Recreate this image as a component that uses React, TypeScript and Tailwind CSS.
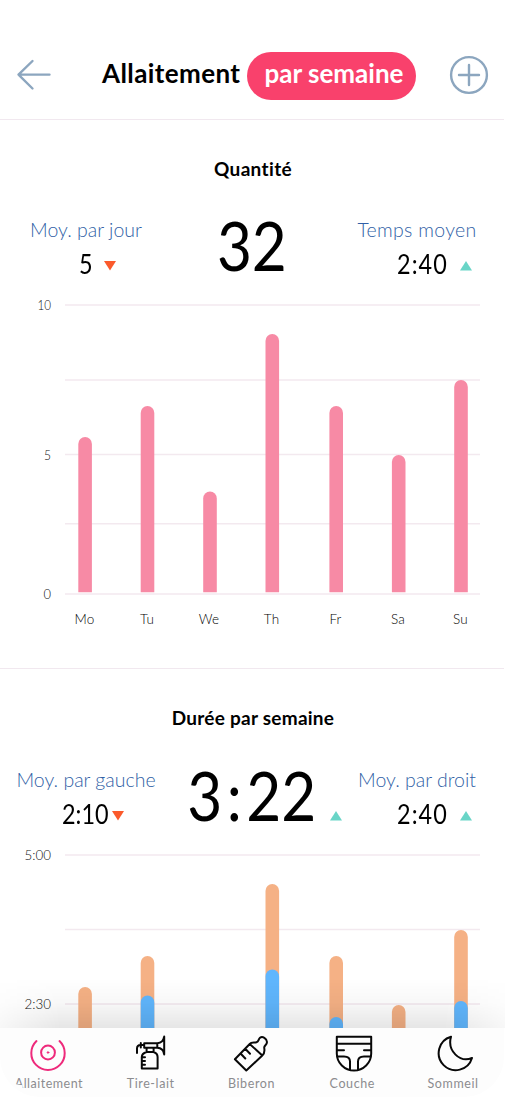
import React from "react";

type Bar = { x: number; top: number; inner?: number };

const days = ["Mo", "Tu", "We", "Th", "Fr", "Sa", "Su"];
const dayX = [84.5, 147, 209, 271.5, 335.5, 398, 460.5];

const quantity: Bar[] = [
  { x: 78.3, top: 437 },
  { x: 140.7, top: 406 },
  { x: 203.2, top: 491.5 },
  { x: 265.5, top: 334 },
  { x: 329.4, top: 406 },
  { x: 391.9, top: 455 },
  { x: 454.2, top: 380 },
];

const duration: Bar[] = [
  { x: 78.3, top: 437 },
  { x: 140.7, top: 406, inner: 445.5 },
  { x: 265.5, top: 334, inner: 419.5 },
  { x: 329.4, top: 406, inner: 467 },
  { x: 391.9, top: 455 },
  { x: 454.2, top: 380, inner: 451 },
];

function barPath(x: number, top: number, bottom: number) {
  return `M${x} ${bottom}V${top + 7}a6.8 7 0 0 1 13.6 0V${bottom}Z`;
}

function Chart({
  bars,
  color,
  labels,
  lines,
  height,
  bottom,
  xLabels = [],
}: {
  bars: Bar[];
  color: string;
  labels: [number, string, number][];
  lines: number[];
  height: number;
  bottom: number;
  xLabels?: string[];
}) {
  return (
    <svg className="shrink-0" width="505" height={height} viewBox={`0 290 505 ${height}`}>
      {lines.map((y) => (
        <line key={y} x1="65" x2="480" y1={y} y2={y} stroke="#f3e9ef" strokeWidth="1.5" />
      ))}
      {bars.map((b) => (
        <g key={b.x}>
          <path d={barPath(b.x, b.top, bottom)} fill={color} />
          {b.inner && <path d={barPath(b.x, b.inner, bottom)} fill="#60b6fd" />}
        </g>
      ))}
      {labels.map(([y, t, w]) => (
        <text key={t} x="51" y={y} textAnchor="end" textLength={w} lengthAdjust="spacingAndGlyphs" fontSize="14" fontWeight="300" fill="#111">
          {t}
        </text>
      ))}
      {xLabels.map((d, i) => (
        <text key={d} x={dayX[i]} y="623.5" textAnchor="middle" fontSize="13.5" fontWeight="300" letterSpacing="0.2" fill="#000">
          {d}
        </text>
      ))}
    </svg>
  );
}

function Trend({ up = false, className = "" }: { up?: boolean; className?: string }) {
  return (
    <svg className={className} width="12" height="10" viewBox="0 0 12 10">
      <path d={up ? "M0 9.5L6 0L12 9.5Z" : "M0 0H12L6 9.5Z"} fill={up ? "#69d5c7" : "#fb5a2c"} />
    </svg>
  );
}

function StatLabel({ children, className = "" }: { children: string; className?: string }) {
  return (
    <span className={`whitespace-nowrap text-[19.5px] font-light leading-[30px] text-[#315fa6] ${className}`}>
      {children}
    </span>
  );
}

function Header() {
  return (
    <header className="flex h-[120px] w-[504px] shrink-0 items-start border-b-[1.5px] border-[#f1e8ef] pt-[52px]">
      <svg className="ml-[16px] mt-[7px] shrink-0" width="36" height="32" viewBox="0 0 36 32" fill="none" stroke="#8ca6bf" strokeWidth="2.4" strokeLinecap="round" strokeLinejoin="round">
        <path d="M16.5 2L2.5 15.6L16.5 29.5M2.5 15.6H33.5" />
      </svg>
      <h1 className="ml-[50px] flex items-start text-[26px] font-bold leading-[42px] text-black">
        <span className="w-[145px] whitespace-nowrap tracking-[0.4px]">Allaitement</span>
        <span className="flex h-[48px] w-[169px] justify-center whitespace-nowrap rounded-full bg-[#f9416c] pl-[5px] leading-[42px] text-white">
          par semaine
        </span>
      </h1>
      <svg className="ml-[33px] mt-[3px] shrink-0" width="40" height="40" viewBox="0 0 40 40" fill="none" stroke="#8ca6bf" strokeWidth="2.4" strokeLinecap="round">
        <circle cx="20" cy="20" r="17.9" />
        <path d="M20 10V30M10 20H30" />
      </svg>
    </header>
  );
}

function Tab({ label, active = false, children }: { label: string; active?: boolean; children: React.ReactNode }) {
  return (
    <a className="flex w-[100.8px] flex-col items-center pt-[6px]">
      <svg
        className={active ? "-ml-[4px]" : ""}
        width="40"
        height="38"
        viewBox="0 0 40 38"
        fill="none"
        stroke={active ? "#ee2a7b" : "#080808"}
        strokeWidth="2"
        strokeLinecap="round"
        strokeLinejoin="round"
      >
        {children}
      </svg>
      <span
        className={
          active
            ? "-ml-[3px] whitespace-nowrap text-[12.5px] leading-[24px] tracking-[0.5px] text-[#8c8c8f] [clip-path:polygon(0_0,100%_0,100%_100%,8px_100%,8px_55%,0_50%)]"
            : "-ml-px whitespace-nowrap text-[12.5px] leading-[24px] tracking-[0.6px] text-[#8c8c8f]"
        }
      >
        {label}
      </span>
    </a>
  );
}

export default function App() {
  return (
    <div className="relative flex h-[1097px] w-[505px] flex-col overflow-hidden bg-white font-['Lato',sans-serif] text-black">
      <Header />
      <section className="flex h-[549px] w-[504px] shrink-0 flex-col border-b-[1.5px] border-[#f1e8ef] pt-[37px]">
        <h2 className="pl-[2px] text-center text-[19px] font-bold leading-[24px] tracking-[0.35px]">Quantité</h2>
        <div className="mt-[34px] flex h-[75px] w-[505px] shrink-0">
          <div className="flex w-[172px] flex-col items-center">
            <StatLabel>Moy. par jour</StatLabel>
            <div className="flex w-full items-center pl-[79px] leading-[38px]">
              <span className="w-[25px] text-[26px]">
                <span className="inline-block origin-left scale-x-90">5</span>
              </span>
              <Trend className="mt-[4px]" />
            </div>
          </div>
          <div className="flex w-[160px] justify-center text-[67px] leading-[60px]">
            <span className="scale-x-90">32</span>
          </div>
          <div className="flex w-[173px] flex-col items-center">
            <StatLabel className="-ml-[3px] tracking-[0.3px]">Temps moyen</StatLabel>
            <div className="flex w-full items-center pl-[65px] leading-[38px]">
              <span className="w-[63px] text-[26px]">
                <span className="inline-block origin-left scale-x-90 tracking-[1.2px]">2:40</span>
              </span>
              <Trend up className="mt-[4px]" />
            </div>
          </div>
        </div>
        <Chart
          bars={quantity}
          color="#f78aa5"
          height={340}
          bottom={592.3}
          lines={[305, 380, 454.5, 523.7, 594]}
          labels={[[310, "10", 13.5], [459.5, "5", 7], [599, "0", 7.5]]}
          xLabels={days}
        />
      </section>
      <section className="flex w-[504px] shrink-0 flex-col pt-[37px]">
        <h2 className="pl-[2px] text-center text-[19px] font-bold leading-[24px] tracking-[0.25px]">Durée par semaine</h2>
        <div className="mt-[34.5px] flex h-[75px] w-[505px] shrink-0">
          <div className="flex w-[172px] flex-col items-center">
            <StatLabel>Moy. par gauche</StatLabel>
            <div className="flex w-full items-center pl-[62px] leading-[38px]">
              <span className="w-[50px] text-[26px]">
                <span className="inline-block origin-left scale-x-90">2:10</span>
              </span>
              <Trend className="mt-[4px]" />
            </div>
          </div>
          <div className="flex w-[160px] justify-center text-[67px] leading-[60px]">
            <span className="flex scale-x-90">
              3<span className="mx-[5px]">:</span>22
            </span>
          </div>
          <div className="flex w-[173px] flex-col items-center">
            <StatLabel className="-ml-[3px]">Moy. par droit</StatLabel>
            <div className="flex w-full items-center leading-[38px]">
              <Trend up className="-ml-[2.5px] mt-[4px]" />
              <span className="ml-[55.5px] w-[63px] text-[26px]">
                <span className="inline-block origin-left scale-x-90 tracking-[1.2px]">2:40</span>
              </span>
              <Trend up className="mt-[4px]" />
            </div>
          </div>
        </div>
        <Chart
          bars={duration}
          color="#f5b185"
          height={190}
          bottom={480}
          lines={[305, 379.5, 454]}
          labels={[[310, "5:00", 26.5], [459, "2:30", 26.5]]}
        />
      </section>
      <div className="absolute bottom-0 left-0 w-[505px] bg-white">
        <div className="absolute -top-[50px] left-0 h-[50px] w-full bg-linear-to-b from-transparent via-black/3 to-black/10 [mask-image:linear-gradient(to_right,rgba(0,0,0,0.3),black_12%,black_88%,rgba(0,0,0,0.3))]" />
        <nav className="flex h-[69px] w-[504px] rounded-b-[40px] bg-[#fdfdfd]">
          <Tab label="Allaitement" active>
            <path d="M8.5 7.1a16.7 16.7 0 1 0 23 0" />
            <circle cx="20" cy="18.5" r="6.9" />
            <circle cx="20" cy="18.5" r="0.8" fill="#ee2a7b" strokeWidth="1" />
          </Tab>
          <Tab label="Tire-lait">
            <path d="M6 19V14.5c0-2.2 1-3.5 3.5-3.5H13M9.8 9V13.5M13.2 9.3H26.3V13.8H13.2ZM33.2 2.5V20.5M33 3.2C32.5 7 29.5 9 26.3 9.3M33 20C32.5 16 29.5 14 26.3 13.8M15.6 14V18H22.6V14M15.6 18C12.5 19 10.8 20.5 10.8 23V34.5H26.6V23C26.6 20.5 25.5 19 22.6 18M11 23.3H14M11 27H14M11 30.7H14" />
          </Tab>
          <Tab label="Biberon">
            <path d="M17.7 10L2.9 25.2L14.3 36.5L30.3 21.5ZM17.7 10C19.5 7.8 22 9 24.5 8.3C27 7.6 26 5.5 28 3.8C30.5 1.8 34.8 4.5 35 8C35 10.8 32.2 11.5 32.2 13.5C32.4 16 33.5 18.5 30.3 21.5M13.5 15L18 19.8M8.8 19.8L13.3 24.5" />
          </Tab>
          <Tab label="Couche">
            <path d="M3.8 2.8H38.2V19.5a17.2 17 0 0 1-34.4 0ZM3.8 9.8H38.2M3.8 16.3H11M38.2 16.3H31M4 22.5H11c4 0 6 2 6 5V36M38 22.5H31c-4 0-6 2-6 5V36" />
          </Tab>
          <Tab label="Sommeil">
            <path d="M17 2.8A17 17 0 1 0 38 24C26 29 13 17 17 2.8Z" />
          </Tab>
        </nav>
      </div>
    </div>
  );
}
